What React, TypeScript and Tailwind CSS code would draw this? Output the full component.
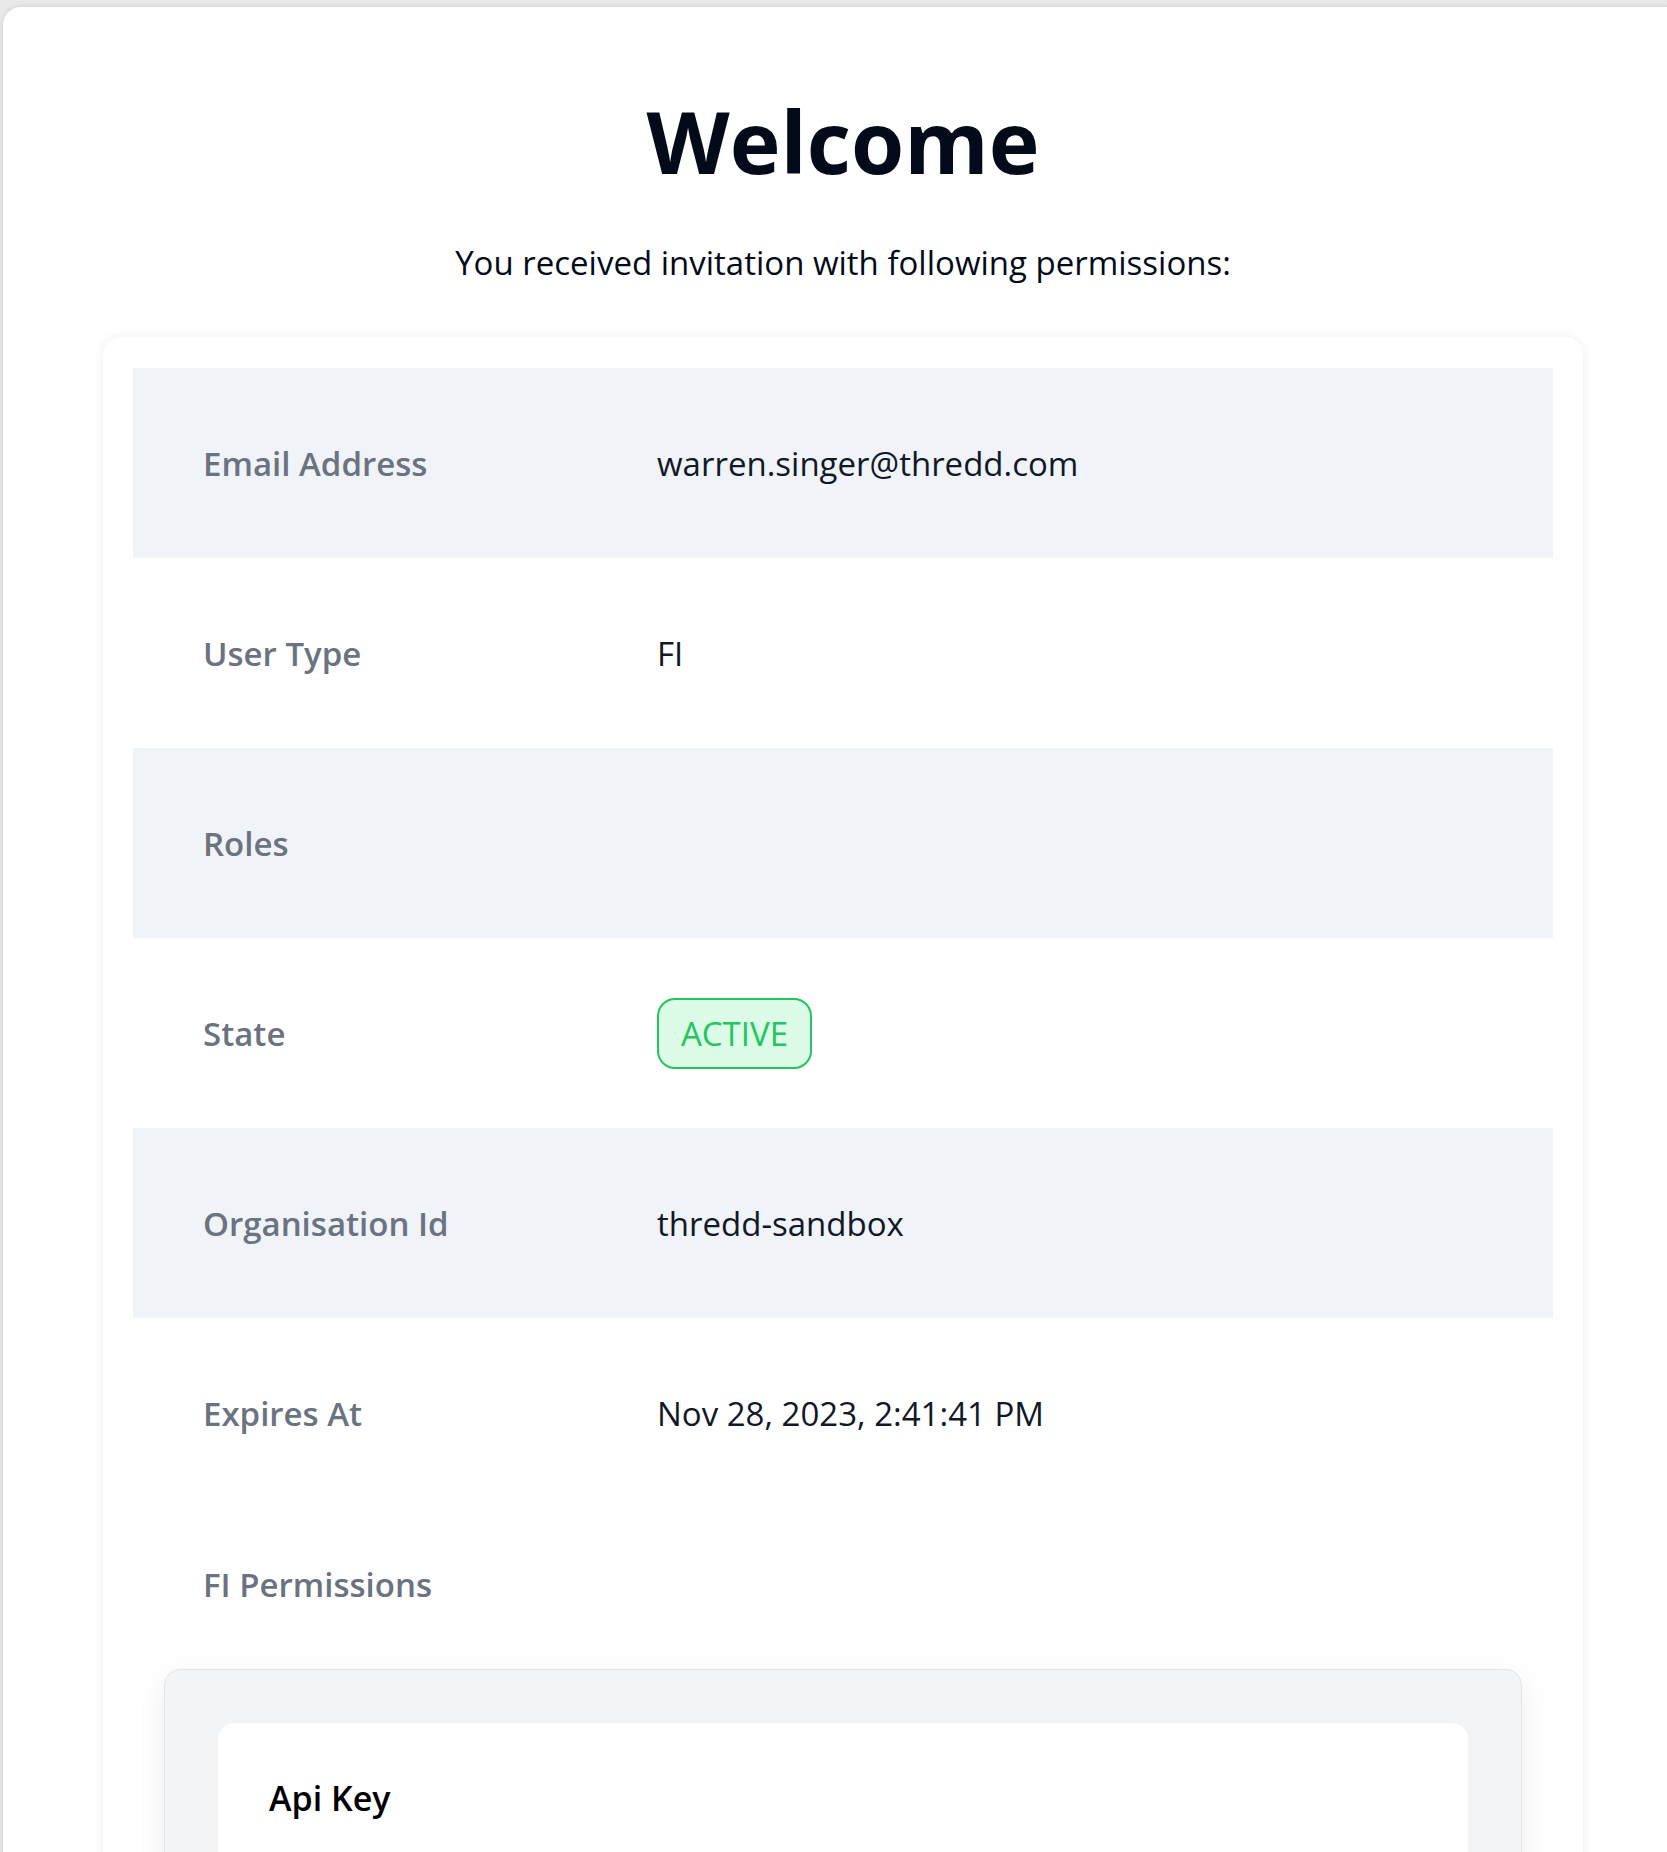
const details = [
  { label: "Email Address", value: "warren.singer@thredd.com" },
  { label: "User Type", value: "FI" },
  { label: "Roles", value: "" },
  { label: "State", value: "ACTIVE", badge: true },
  { label: "Organisation Id", value: "thredd-sandbox" },
  { label: "Expires At", value: "Nov 28, 2023, 2:41:41 PM" },
];

const DetailRow = ({
  label,
  value,
  badge,
  shaded,
}: {
  label: string;
  value: string;
  badge?: boolean;
  shaded: boolean;
}) => (
  <div
    className={`flex h-[190px] items-center px-[70px] ${
      shaded ? "bg-[#f0f3f8]" : "bg-white"
    }`}
  >
    <div className="w-[454px] shrink-0 text-[33px] leading-none font-semibold text-[#6b7280]">
      {label}
    </div>
    {badge ? (
      <span className="flex h-[71px] w-[155px] items-center justify-center rounded-[18px] border-2 border-[#22c55e] bg-[#dcfce7] text-[33px] leading-none text-[#22c55e]">
        {value}
      </span>
    ) : (
      <div className="text-[33px] leading-none text-[#111827]">{value}</div>
    )}
  </div>
);

export default function App() {
  return (
    <div
      className="h-[1852px] overflow-hidden bg-[#e9e9e9] pt-[7px] pl-[3px]"
      style={{ fontFamily: '"Open Sans", "Noto Sans", sans-serif' }}
    >
      <div className="min-h-[2000px] w-[1680px] rounded-[18px] bg-white pt-[91px] shadow-[0_0_6px_rgba(0,0,0,0.12)]">
        <h1 className="text-center text-[86px] leading-none font-bold text-[#030a19]">
          Welcome
        </h1>
        <p className="mt-[62px] text-center text-[33px] leading-none text-[#030a19]">
          You received invitation with following permissions:
        </p>

        <div className="mx-[100px] mt-[58px] rounded-[18px] bg-white px-[30px] pt-[31px] shadow-[0_0_12px_rgba(0,0,0,0.07)]">
          {details.map((row, i) => (
            <DetailRow key={row.label} {...row} shaded={i % 2 === 0} />
          ))}

          <div className="pt-[60px]">
            <div className="px-[70px] text-[33px] leading-none font-semibold text-[#6b7280]">
              FI Permissions
            </div>
            <div className="mx-[31px] mt-[68px] rounded-[16px] border border-[#e3e5e9] bg-[#f3f4f6] px-[53px] pt-[53px] pb-[200px] shadow-[0_10px_30px_rgba(0,0,0,0.08)]">
              <div className="min-h-[400px] rounded-[16px] bg-white px-[51px] pt-[58px]">
                <h3 className="text-[34px] leading-none font-semibold text-black">
                  Api Key
                </h3>
              </div>
            </div>
          </div>
        </div>
      </div>
    </div>
  );
}
